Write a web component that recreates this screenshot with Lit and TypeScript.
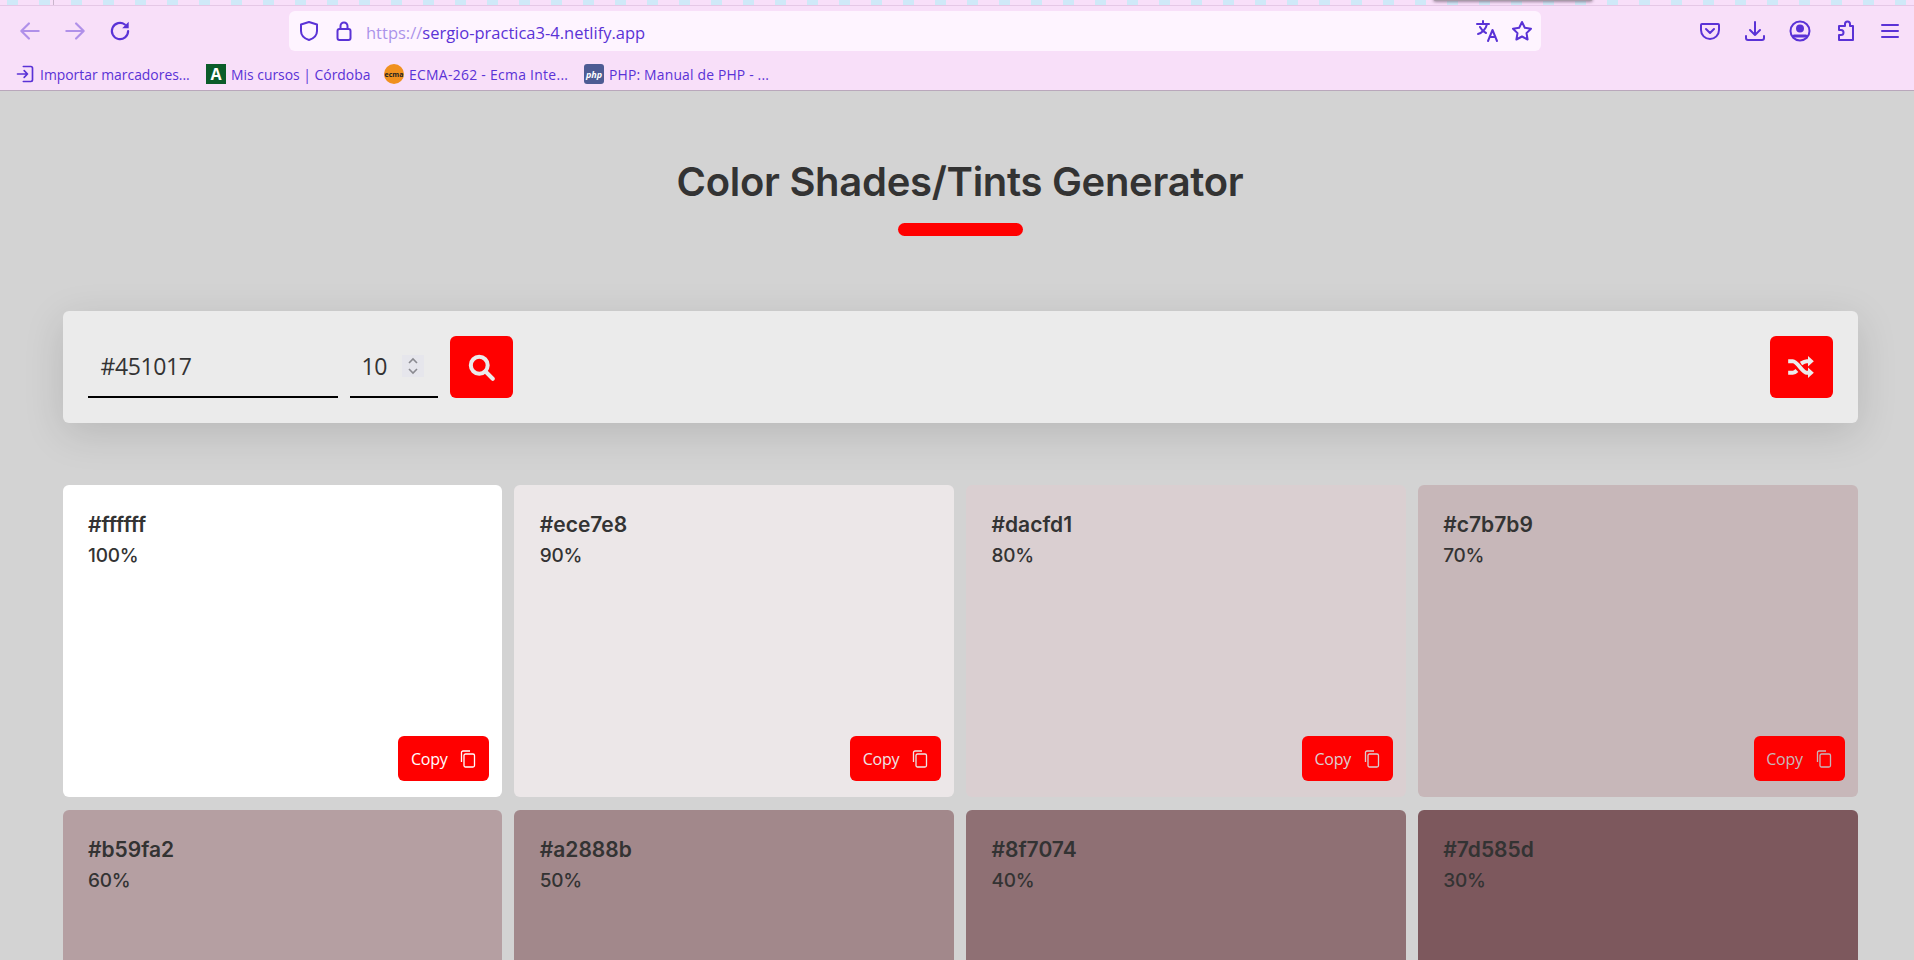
import { LitElement, html, css, svg } from "lit";
import { customElement } from "lit/decorators.js";

const TINTS = [
  ["#ffffff", "100%"], ["#ece7e8", "90%"], ["#dacfd1", "80%"], ["#c7b7b9", "70%"],
  ["#b59fa2", "60%"], ["#a2888b", "50%"], ["#8f7074", "40%"], ["#7d585d", "30%"],
];

const ic = (w: number, body: unknown, cls = "ic") => html`<svg class=${cls} width=${w} height=${w} viewBox="0 0 24 24" fill="none" stroke="currentColor" stroke-width="2" stroke-linecap="round" stroke-linejoin="round">${body}</svg>`;

@customElement("app-root")
export class AppRoot extends LitElement {
  static styles = css`
    :host { display: block; height: 960px; overflow: hidden; background: #d3d3d3; color: #333; font-family: "Inter", "Liberation Sans", sans-serif; }
    .strip { position: relative; height: 5px; border-bottom: 1px solid #e5c8e6; background: repeating-linear-gradient(90deg, #f8dff9 0 7px, #cfe9f8 7px 18px, #f8dff9 18px 32px); overflow: hidden; }
    .tick { position: absolute; left: 53px; top: 0; width: 1px; height: 5px; background: #c9b6cc; }
    .blob { position: absolute; left: 1433px; top: -2px; width: 160px; height: 3px; background: #a89aa8; border-radius: 0 0 6px 6px; box-shadow: 0 1px 3px rgba(90,70,90,.6); }
    .chrome { background: #f8dff9; color: #5a32d6; border-bottom: 1px solid #b9a7bb; height: 85px; box-sizing: border-box; font-family: "Open Sans", "Noto Sans", sans-serif; }
    .toolbar { height: 50px; display: flex; align-items: center; padding: 0 12px 0 17px; }
    .nav { display: flex; gap: 19px; width: 272px; align-items: center; }
    .dim { opacity: .45; }
    .url { flex: none; width: 1252px; height: 40px; background: #fef4ff; border-radius: 6px; display: flex; align-items: center; padding: 0 7px 0 8px; box-sizing: border-box; font-size: 16.5px; }
    .url .shield { margin-right: 11px; }
    .url .addr { margin-left: 10px; flex: 1; padding-top: 3px; }
    .url .addr span { opacity: .5; }
    .url .r { display: flex; gap: 11px; }
    .tools { margin-left: auto; display: flex; gap: 21px; align-items: center; }
    .bookmarks { height: 35px; display: flex; align-items: center; padding: 1px 0 0 15px; box-sizing: border-box; font-size: 13.9px; }
    .bm { display: flex; align-items: center; gap: 5px; white-space: nowrap; flex: none; }
    .b1 { width: 191px; }
    .b2 { width: 178px; }
    .b3 { width: 200px; letter-spacing: .3px; }
    .b4 { letter-spacing: .18px; }
    .fav { width: 20px; height: 20px; flex: none; display: flex; align-items: center; justify-content: center; letter-spacing: 0; }
    .fa { background: #0b5c2a; color: #fff; font: 700 16px "Open Sans", sans-serif; }
    .fe { background: #f0901e; border-radius: 50%; color: #222; font: 700 7px "Open Sans", sans-serif; }
    .fp { background: #4d5c94; border-radius: 3px; color: #fff; font: italic 700 9px "Open Sans", sans-serif; }
    .page { padding: 0 56.5px 0 62.5px; }
    h1 { margin: 0; padding-top: 62px; font-size: 40px; line-height: 58px; font-weight: 600; text-align: center; letter-spacing: -.3px; }
    .bar { width: 125px; height: 13px; border-radius: 7px; background: #f00; margin: 12px auto 0; }
    .panel { margin-top: 75px; height: 112px; background: #ebebeb; border-radius: 6px; box-shadow: 0 10px 40px rgba(0,0,0,.13); display: flex; align-items: center; padding: 0 25px; box-sizing: border-box; }
    .field { height: 62px; border-bottom: 2px solid #000; box-sizing: border-box; display: flex; align-items: center; font: 23px "Open Sans", "Noto Sans", sans-serif; letter-spacing: -.4px; color: #333; }
    .hex { width: 250px; padding-left: 13px; }
    .num { width: 88px; margin-left: 12px; padding-left: 12px; }
    .spin { width: 22px; height: 22px; background: #e6e6ec; color: #8a8a90; margin-left: 15px; display: flex; align-items: center; justify-content: center; }
    .btn { width: 63px; height: 62px; background: #f00; border-radius: 6px; color: #ebebeb; display: flex; align-items: center; justify-content: center; }
    .search { margin-left: 12px; }
    .shuffle { margin-left: auto; }
    .grid { margin-top: 62px; display: grid; grid-template-columns: repeat(4, 1fr); gap: 13px 12px; }
    .card { height: 312px; border-radius: 6px; padding: 24px 25.5px; box-sizing: border-box; display: flex; flex-direction: column; position: relative; }
    .hexv { font-size: 21px; font-weight: 600; line-height: 31px; }
    .pct { font-size: 19px; line-height: 32px; font-weight: 500; letter-spacing: -.25px; }
    .copy { position: absolute; right: 13px; bottom: 16px; width: 91px; height: 45px; border-radius: 6px; background: #f00; display: flex; align-items: center; justify-content: center; gap: 13px; font: 16px "Open Sans", sans-serif; letter-spacing: -.3px; box-sizing: border-box; padding-top: 1px; }
  `;

  render() {
    return html`
      <div class="strip"><div class="tick"></div><div class="blob"></div></div>
      <div class="chrome">
        <div class="toolbar">
          <div class="nav">
            ${ic(26, svg`<path d="M20 12H4M11 5l-7 7 7 7"/>`, "dim")}
            ${ic(26, svg`<path d="M4 12h16M13 5l7 7-7 7"/>`, "dim")}
            ${ic(26, svg`<path d="M19.500 12a7.500 7.500 0 1 1-3-6"/><path d="M20 3.500V9.500h-6z" fill="currentColor" stroke="none"/>`)}
          </div>
          <div class="url">
            ${ic(24, svg`<path d="M12 3l8 2.500V12c0 4.500-3.500 7.500-8 9-4.500-1.500-8-4.500-8-9V5.500z"/>`, "shield")}
            ${ic(24, svg`<rect x="5.500" y="10" width="13" height="11" rx="2"/><path d="M8.500 10V7a3.500 3.500 0 0 1 7 0v3"/>`)}
            <div class="addr"><span>https://</span>sergio-practica3-4.netlify.app</div>
            <div class="r">
              ${ic(24, svg`<path d="M2 5h12M8 2v3M12 5c-1 5-5 9-9 10M5 8c1.500 3 4 5 6 6M13 22l4.500-11 4.500 11M14.500 18h6"/>`)}
              ${ic(24, svg`<path d="M12 3l2.800 5.800 6.200.9-4.500 4.400 1.100 6.400L12 17.500 6.400 20.500l1.100-6.400L3 9.700l6.200-.9z"/>`)}
            </div>
          </div>
          <div class="tools">
            ${ic(24, svg`<path d="M4 5h16a1 1 0 0 1 1 1v5a9 9 0 0 1-18 0V6a1 1 0 0 1 1-1zM8 10l4 4 4-4"/>`)}
            ${ic(24, svg`<path d="M12 3v13M7 11l5 5 5-5M3 17v2a2 2 0 0 0 2 2h14a2 2 0 0 0 2-2v-2"/>`)}
            ${ic(24, svg`<circle cx="12" cy="12" r="9.500"/><circle cx="12" cy="9.500" r="3" fill="currentColor"/><path d="M6 17h12" stroke-width="3"/>`)}
            ${ic(24, svg`<path d="M9 7h3V5a2.500 2.500 0 0 1 5 0v2h3v14H6v-5h2a2.500 2.500 0 0 0 0-5H6V7z"/>`)}
            ${ic(24, svg`<path d="M4 6h16M4 12h16M4 18h16"/>`)}
          </div>
        </div>
        <div class="bookmarks">
          <div class="bm b1">${ic(20, svg`<path d="M10 3h9a2 2 0 0 1 2 2v14a2 2 0 0 1-2 2h-9M3 12h12M11 8l4 4-4 4"/>`)}Importar marcadores...</div>
          <div class="bm b2"><div class="fav fa">A</div>Mis cursos | Córdoba</div>
          <div class="bm b3"><div class="fav fe">ecma</div>ECMA-262 - Ecma Inte...</div>
          <div class="bm b4"><div class="fav fp">php</div>PHP: Manual de PHP - ...</div>
        </div>
      </div>
      <div class="page">
        <h1>Color Shades/Tints Generator</h1>
        <div class="bar"></div>
        <div class="panel">
          <div class="field hex">#451017</div>
          <div class="field num">10
            <div class="spin"><svg width="12" height="18" viewBox="0 0 12 18" fill="none" stroke="currentColor" stroke-width="1.600"><path d="M2 6l4-4 4 4M2 12l4 4 4-4"/></svg></div>
          </div>
          <div class="btn search"><svg width="27" height="27" viewBox="0 0 24 24" fill="none" stroke="currentColor" stroke-width="3.600" stroke-linecap="round"><circle cx="10" cy="10" r="7.500"/><path d="M16 16l6 6"/></svg></div>
          <div class="btn shuffle"><svg width="28" height="28" viewBox="0 0 24 24" fill="none" stroke="currentColor" stroke-width="3.400"><path d="M1 7h4c4 0 8 10 12 10h2M1 17h4c1.500 0 2.500-1 3.500-2M12 9c1.500-1 3-2 5-2h2"/><path d="M18 2.500l5 4.500-5 4.500zM18 12.500l5 4.500-5 4.500z" fill="currentColor" stroke="none"/></svg></div>
        </div>
        <div class="grid">
          ${TINTS.map(([h, p], i) => html`
            <div class="card" style="background:${h}">
              <div class="hexv">${h}</div>
              <div class="pct">${p}</div>
              ${i < 4 ? html`<div class="copy" style="color:${h}">Copy
                <svg width="16" height="18" viewBox="0 0 16 18" fill="none" stroke="currentColor" stroke-width="1.300"><rect x="4" y="4" width="10.500" height="13" rx="1.500"/><path d="M1.500 12V2.500a1.500 1.500 0 0 1 1.500-1.500h7"/></svg>
              </div>` : ""}
            </div>`)}
        </div>
      </div>
    `;
  }
}
